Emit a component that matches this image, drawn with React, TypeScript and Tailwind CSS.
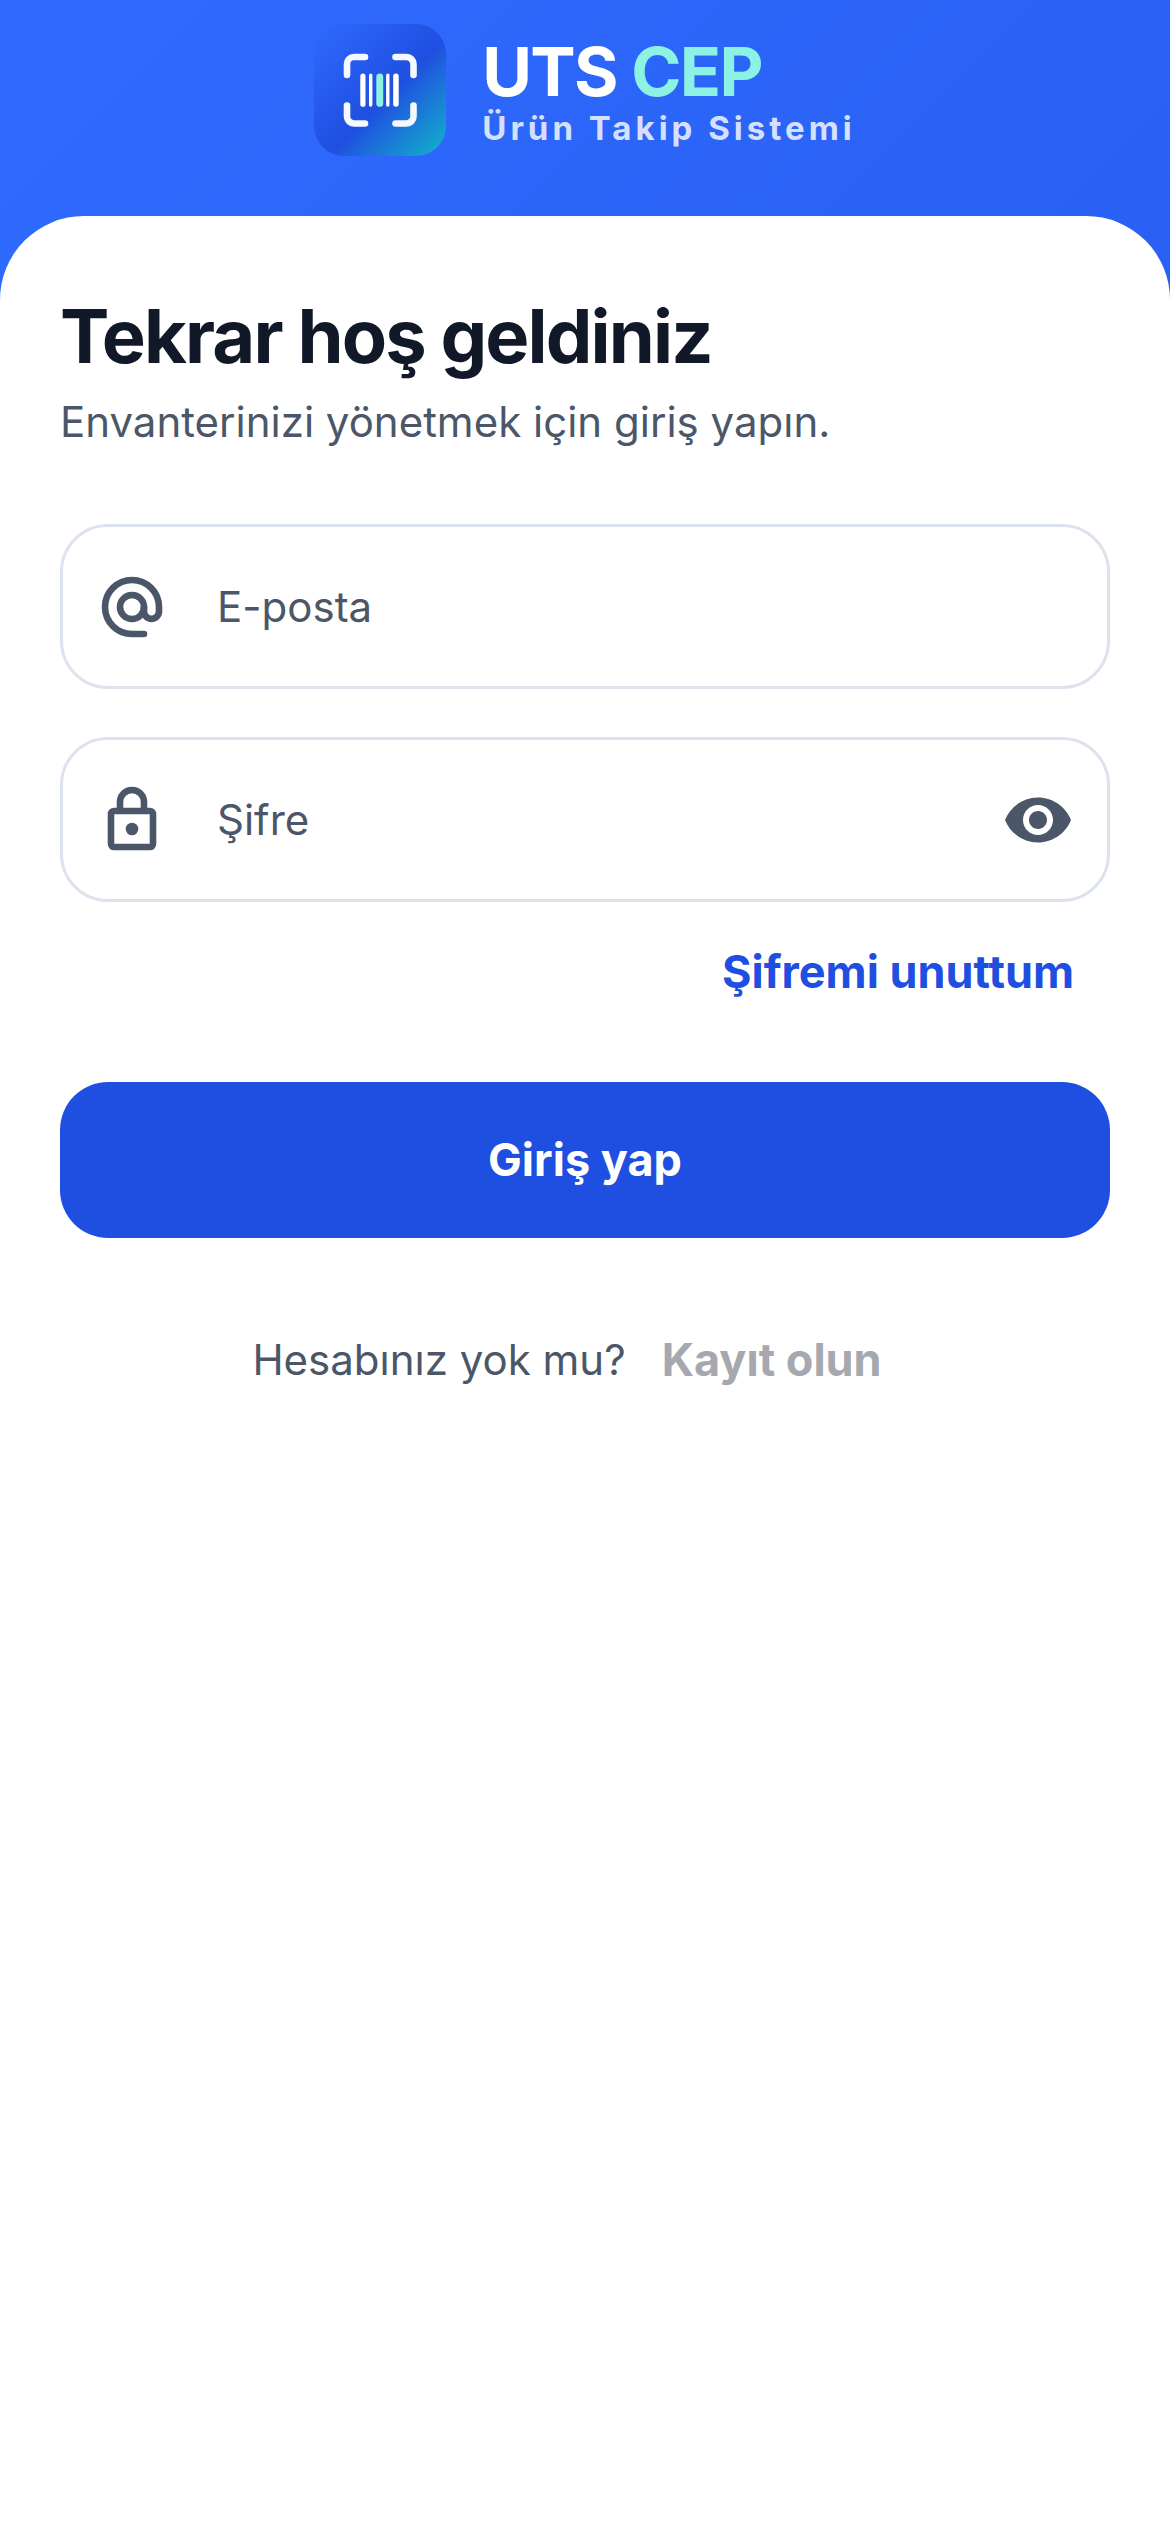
import { useState } from "react";
import { MdVisibility, MdVisibilityOff } from "react-icons/md";

function LogoMark() {
  return (
    <svg viewBox="0 0 132 132" className="size-33 shrink-0" aria-hidden="true">
      <defs>
        <linearGradient id="logo-bg" x1="0" y1="0" x2="1" y2="1">
          <stop offset="0" stopColor="#2f6bff" />
          <stop offset="0.55" stopColor="#1f4fe0" />
          <stop offset="1" stopColor="#12b5c9" />
        </linearGradient>
      </defs>
      <rect width="132" height="132" rx="30" fill="url(#logo-bg)" />
      <g fill="none" stroke="#f5f8ff" strokeWidth="6.6" strokeLinecap="round" strokeLinejoin="round">
        <path d="M33 51V40a7 7 0 0 1 7-7h11" />
        <path d="M81.500 33h11a7 7 0 0 1 7 7v11" />
        <path d="M99.500 81.500v11a7 7 0 0 1-7 7h-11" />
        <path d="M51 99.500H40a7 7 0 0 1-7-7v-11" />
      </g>
      <g fill="#ffffff">
        <rect x="46.300" y="49.500" width="5.200" height="33.300" rx="2.600" />
        <rect x="55" y="49.500" width="3.400" height="33.300" rx="1.700" />
        <rect x="62.300" y="49.500" width="6.900" height="33.300" rx="3.400" fill="#8cf2e4" />
        <rect x="72.100" y="49.500" width="3.400" height="33.300" rx="1.700" />
        <rect x="79.200" y="49.500" width="5.500" height="33.300" rx="2.700" />
      </g>
    </svg>
  );
}

function AtIcon() {
  return (
    <svg viewBox="0 0 24 24" className="size-18" fill="none" stroke="currentColor" strokeWidth="2.2" strokeLinecap="round" aria-hidden="true">
      <path d="M16 21h-4a9 9 0 1 1 9-9v1.450a2.500 2.500 0 0 1-5 0V12" />
      <circle cx="12" cy="12" r="4" />
    </svg>
  );
}

function LockIcon() {
  return (
    <svg viewBox="0 0 24 24" className="size-18" fill="none" stroke="currentColor" strokeWidth="2.2" aria-hidden="true">
      <path d="M8 9V6a4 4 0 0 1 8 0v3" />
      <rect x="5" y="9" width="14" height="12" rx="1" />
      <circle cx="12" cy="15" r="2.100" fill="currentColor" stroke="none" />
    </svg>
  );
}

const fieldClass =
  "flex h-[165px] items-center rounded-[48px] border-3 border-[#dde3ee] bg-white text-[#4b5768] focus-within:border-[#1f4fe0]";
const inputClass =
  "h-full min-w-0 flex-1 bg-transparent pl-4 text-[42px] text-[#111827] outline-none placeholder:text-[#4b5768] placeholder:opacity-100";

export default function App() {
  const [visible, setVisible] = useState(false);
  return (
    <div className="flex min-h-screen flex-col bg-[linear-gradient(135deg,#2f6bff_0%,#1f4fe0_100%)] font-['Inter',sans-serif]">
      <header className="flex items-center justify-center gap-9 pt-6 pb-15">
        <LogoMark />
        <div className="flex flex-col pt-1">
          <p className="text-[68px] leading-[72px] font-bold tracking-tight text-white">
            UTS <span className="text-[#8cf2e4]">CEP</span>
          </p>
          <p className="text-[33px] leading-[42px] font-bold tracking-[4px] text-[#d5e0ff]">Ürün Takip Sistemi</p>
        </div>
      </header>

      <main className="flex-1 rounded-t-[84px] bg-white px-15 pt-18">
        <h1 className="text-[74px] leading-[96px] font-bold tracking-tight text-[#111827]">Tekrar hoş geldiniz</h1>
        <p className="mt-2 text-[42px] leading-[60px] text-[#4b5768]">Envanterinizi yönetmek için giriş yapın.</p>

        <form className="mt-18 flex flex-col" onSubmit={(e) => e.preventDefault()}>
          <div className={fieldClass}>
            <label htmlFor="email" aria-label="E-posta" className="flex w-[138px] justify-center">
              <AtIcon />
            </label>
            <input id="email" type="email" aria-label="E-posta" placeholder="E-posta" className={inputClass} />
          </div>
          <div className={`${fieldClass} mt-12`}>
            <label htmlFor="password" aria-label="Şifre" className="flex w-[138px] justify-center">
              <LockIcon />
            </label>
            <input
              id="password"
              type={visible ? "text" : "password"}
              aria-label="Şifre"
              placeholder="Şifre"
              className={inputClass}
            />
            <button
              type="button"
              aria-label={visible ? "Şifreyi gizle" : "Şifreyi göster"}
              onClick={() => setVisible(!visible)}
              className="flex w-[138px] justify-center"
            >
              {visible ? <MdVisibilityOff className="size-18" /> : <MdVisibility className="size-18" />}
            </button>
          </div>
          <a href="#sifre" className="mt-2 self-end px-9 py-8 text-[45px] leading-[60px] font-bold text-[#1f4fe0]">
            Şifremi unuttum
          </a>
          <button type="submit" className="mt-12 h-39 rounded-[48px] bg-[#1f4fe0] text-[45px] font-bold text-white">
            Giriş yap
          </button>
        </form>

        <div className="mt-15 flex items-center justify-center">
          <p className="text-[42px] leading-[60px] text-[#4b5768]">Hesabınız yok mu?</p>
          <button type="button" disabled className="px-9 py-8 text-[45px] leading-[60px] font-bold text-[#a5a8af]">
            Kayıt olun
          </button>
        </div>
      </main>
    </div>
  );
}
